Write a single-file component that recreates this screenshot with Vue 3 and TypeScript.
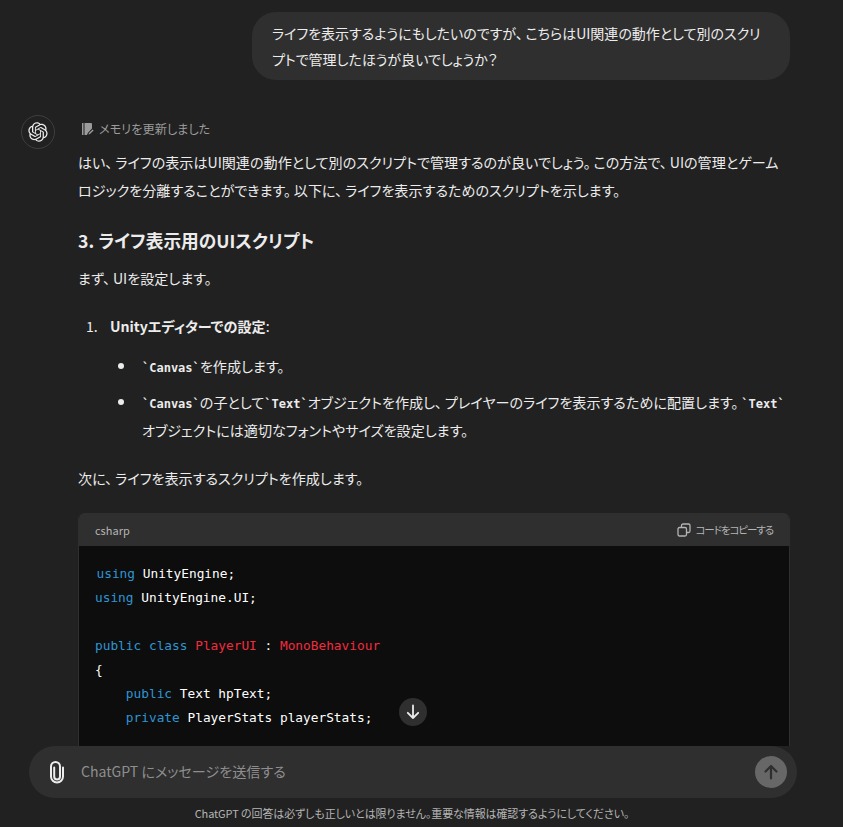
<template>
  <div class="page">
    <div class="thread">
      <div class="user-row">
        <div class="user-bubble">ライフを表示するようにもしたいのですが、&thinsp;こちらはUI関連の動作として別のスクリプトで管理したほうが良いでしょうか？</div>
      </div>

      <div class="reply">
        <div class="avatar">
          <svg viewBox="0 0 41 41" width="20" height="20" fill="currentColor">
            <path :d="logoPath" />
          </svg>
        </div>
        <div class="reply-body">
          <div class="memory">
            <svg viewBox="0 0 14 14" width="14" height="14" fill="currentColor">
              <path d="M2 1h1.5v12H2zM4.5 1H11a1 1 0 0 1 1 1v4.6L8 10.8 6.9 13H4.5z" />
              <path d="M9 11l3.6-3.6 1 1L10 12l-1.6.6z" />
            </svg>
            <span>メモリを更新しました</span>
          </div>
          <p class="para">はい、&thinsp;ライフの表示はUI関連の動作として別のスクリプトで管理するのが良いでしょう。&thinsp;この方法で、&thinsp;UIの管理とゲームロジックを分離することができます。&thinsp;以下に、&thinsp;ライフを表示するためのスクリプトを示します。</p>
          <h3 class="heading">3. ライフ表示用のUIスクリプト</h3>
          <p class="para">まず、&thinsp;UIを設定します。</p>

          <div class="step">
            <span class="step-num">1.</span>
            <strong>Unityエディターでの設定</strong><span>:</span>
          </div>
          <ul class="bullets">
            <li><code>`Canvas`</code>を作成します。</li>
            <li><code>`Canvas`</code>の子として<code>`Text`</code>オブジェクトを作成し、&thinsp;プレイヤーのライフを表示するために配置します。&thinsp;<code>`Text`</code>オブジェクトには適切なフォントやサイズを設定します。</li>
          </ul>

          <p class="para next">次に、&thinsp;ライフを表示するスクリプトを作成します。</p>

          <div class="code-card">
            <div class="code-head">
              <span>csharp</span>
              <span class="copy">
                <svg viewBox="0 0 14 14" width="14" height="14" fill="none" stroke="currentColor" stroke-width="1.3">
                  <rect x="1" y="4.5" width="8.5" height="8.5" rx="1.5" />
                  <path d="M4.5 4.5V2.5A1.5 1.5 0 0 1 6 1h5.5A1.5 1.5 0 0 1 13 2.5V8a1.5 1.5 0 0 1-1.5 1.5h-2" />
                </svg>
                <span class="copy-label">コードをコピーする</span>
              </span>
            </div>
            <div class="code-body">
              <div v-for="(line, i) in codeLines" :key="i" class="code-line">
                <span v-for="(tok, j) in line" :key="j" :class="tok.c">{{ tok.t }}</span>
              </div>
            </div>
          </div>
        </div>
      </div>
    </div>

    <button class="scroll-down" type="button">
      <svg viewBox="0 0 20 20" width="20" height="20" fill="none" stroke="currentColor" stroke-width="1.8" stroke-linecap="round" stroke-linejoin="round">
        <path d="M10 3.5v12.5M4.8 10.8 10 16l5.2-5.2" />
      </svg>
    </button>

    <div class="bottom">
      <div class="composer">
        <svg class="clip" viewBox="0 0 24 24" width="24" height="24" fill="none" stroke="currentColor" stroke-width="2" stroke-linecap="round">
          <path d="M9.2 7.5v9a2.9 2.9 0 0 0 5.8 0V6.5a4.5 4.5 0 0 0-9 0v10a6 6 0 0 0 12 0v-9" />
        </svg>
        <span class="placeholder">ChatGPT にメッセージを送信する</span>
        <span class="send">
          <svg viewBox="0 0 20 20" width="20" height="20" fill="none" stroke="currentColor" stroke-width="2.2" stroke-linecap="round" stroke-linejoin="round">
            <path d="M10 16.5V4M4.5 9.5 10 4l5.5 5.5" />
          </svg>
        </span>
      </div>
      <div class="disclaimer">ChatGPT の回答は必ずしも正しいとは限りません。重要な情報は確認するようにしてください。</div>
    </div>
  </div>
</template>

<script setup lang="ts">
interface Token {
  t: string
  c?: string
}

const logoPath =
  'M37.5324 16.8707C37.9808 15.5241 38.1363 14.0974 37.9886 12.6859C37.8409 11.2744 37.3934 9.91076 36.676 8.68622C35.6126 6.83404 33.9882 5.3676 32.0373 4.4985C30.0864 3.62941 27.9098 3.40259 25.8215 3.85078C24.8796 2.7893 23.7219 1.94125 22.4257 1.36341C21.1295 0.785575 19.7249 0.491269 18.3058 0.500197C16.1708 0.495044 14.0893 1.16803 12.3614 2.42214C10.6335 3.67624 9.34853 5.44666 8.6917 7.47815C7.30085 7.76286 5.98686 8.3414 4.8377 9.17505C3.68854 10.0087 2.73073 11.0782 2.02839 12.312C0.956464 14.1591 0.498905 16.2988 0.721698 18.4228C0.944492 20.5467 1.83612 22.5449 3.268 24.1293C2.81966 25.4759 2.66413 26.9026 2.81182 28.3141C2.95951 29.7256 3.40701 31.0892 4.12437 32.3138C5.18791 34.1659 6.8123 35.6322 8.76321 36.5013C10.7141 37.3704 12.8907 37.5973 14.9789 37.1492C15.9208 38.2107 17.0786 39.0587 18.3747 39.6366C19.6709 40.2144 21.0755 40.5087 22.4946 40.4998C24.6307 40.5054 26.7133 39.8321 28.4418 38.5772C30.1704 37.3223 31.4556 35.5506 32.1119 33.5179C33.5027 33.2332 34.8167 32.6547 35.9659 31.821C37.115 30.9874 38.0728 29.9178 38.7752 28.684C39.8458 26.8371 40.3023 24.6979 40.0789 22.5748C39.8556 20.4517 38.9639 18.4544 37.5324 16.8707ZM22.4978 37.8849C20.7443 37.8874 19.0459 37.2733 17.6994 36.1501C17.7601 36.117 17.8666 36.0586 17.936 36.0161L25.9004 31.4156C26.1003 31.3019 26.2663 31.137 26.3813 30.9378C26.4964 30.7386 26.5563 30.5124 26.5549 30.2825V19.0542L29.9213 20.998C29.9389 21.0068 29.9541 21.0198 29.9656 21.0359C29.977 21.052 29.9842 21.0707 29.9867 21.0902V30.3889C29.9842 32.375 29.1946 34.2791 27.7909 35.6841C26.3872 37.0892 24.4838 37.8806 22.4978 37.8849ZM6.39227 31.0064C5.51397 29.4888 5.19742 27.7107 5.49804 25.9832C5.55718 26.0187 5.66048 26.0818 5.73461 26.1244L13.699 30.7248C13.8975 30.8408 14.1233 30.902 14.3532 30.902C14.583 30.902 14.8088 30.8408 15.0073 30.7248L24.731 25.1103V28.9979C24.7321 29.0177 24.7283 29.0376 24.7199 29.0556C24.7115 29.0736 24.6988 29.0893 24.6829 29.1012L16.6317 33.7497C14.9096 34.7416 12.8643 35.0097 10.9447 34.4954C9.02506 33.9811 7.38785 32.7263 6.39227 31.0064ZM4.29707 13.6194C5.17156 12.0998 6.55279 10.9364 8.19885 10.3327C8.19885 10.4013 8.19491 10.5228 8.19491 10.6071V19.808C8.19351 20.0378 8.25334 20.2638 8.36823 20.4629C8.48312 20.6619 8.64893 20.8267 8.84863 20.9404L18.5723 26.5542L15.206 28.4979C15.1894 28.5089 15.1703 28.5155 15.1505 28.5173C15.1307 28.5191 15.1107 28.516 15.0924 28.5082L7.04046 23.8557C5.32135 22.8601 4.06716 21.2235 3.55289 19.3046C3.03862 17.3858 3.30624 15.3413 4.29707 13.6194ZM31.955 20.0556L22.2312 14.4411L25.5976 12.4981C25.6142 12.4872 25.6333 12.4805 25.6531 12.4787C25.6729 12.4769 25.6928 12.4801 25.7111 12.4879L33.7631 17.1364C34.9967 17.849 36.0017 18.8982 36.6606 20.1613C37.3194 21.4244 37.6047 22.849 37.4832 24.2684C37.3617 25.6878 36.8382 27.0432 35.9743 28.1759C35.1103 29.3086 33.9415 30.1717 32.6047 30.6641C32.6047 30.5947 32.6047 30.4733 32.6047 30.3889V21.188C32.6066 20.9586 32.5474 20.7328 32.4332 20.5338C32.319 20.3348 32.154 20.1698 31.955 20.0556ZM35.3055 15.0128C35.2464 14.9765 35.1431 14.9142 35.069 14.8717L27.1045 10.2712C26.906 10.1554 26.6803 10.0943 26.4504 10.0943C26.2206 10.0943 25.9948 10.1554 25.7963 10.2712L16.0726 15.8858V11.9982C16.0715 11.9783 16.0753 11.9585 16.0837 11.9405C16.0921 11.9225 16.1048 11.9068 16.1207 11.8949L24.1719 7.25025C25.4053 6.53903 26.8158 6.19376 28.2383 6.25482C29.6608 6.31589 31.0364 6.78077 32.2044 7.59508C33.3723 8.40939 34.2842 9.53945 34.8334 10.8531C35.3826 12.1667 35.5464 13.6095 35.3055 15.0128ZM14.2424 21.9419L10.8752 19.9981C10.8576 19.9893 10.8423 19.9763 10.8309 19.9602C10.8195 19.9441 10.8122 19.9254 10.8098 19.9058V10.6071C10.8107 9.18295 11.2173 7.78848 11.9819 6.58696C12.7466 5.38544 13.8377 4.42659 15.1275 3.82264C16.4173 3.21869 17.8524 2.99464 19.2649 3.1767C20.6775 3.35876 22.0089 3.93941 23.1034 4.85067C23.0427 4.88379 22.937 4.94215 22.8668 4.98473L14.9024 9.58517C14.7025 9.69878 14.5366 9.86356 14.4215 10.0626C14.3065 10.2616 14.2466 10.4877 14.2479 10.7175L14.2424 21.9419ZM16.071 17.9991L20.4018 15.4978L24.7325 17.9975V22.9985L20.4018 25.4983L16.071 22.9985V17.9991Z'

const codeLines: Token[][] = [
  [{ t: 'using', c: 'kw' }, { t: ' UnityEngine;' }],
  [{ t: 'using', c: 'kw' }, { t: ' UnityEngine.UI;' }],
  [{ t: ' ' }],
  [
    { t: 'public class', c: 'kw' },
    { t: ' ' },
    { t: 'PlayerUI', c: 'type' },
    { t: ' : ' },
    { t: 'MonoBehaviour', c: 'type' },
  ],
  [{ t: '{' }],
  [{ t: '    ' }, { t: 'public', c: 'kw' }, { t: ' Text hpText;' }],
  [{ t: '    ' }, { t: 'private', c: 'kw' }, { t: ' PlayerStats playerStats;' }],
  [{ t: ' ' }],
]
</script>

<style>
html,
body {
  margin: 0;
  background: #212121;
}
</style>

<style scoped>
.page {
  position: relative;
  width: 843px;
  height: 827px;
  overflow: hidden;
  background: #212121;
  color: #ececec;
  font-family: "Noto Sans CJK JP", "Noto Sans", sans-serif;
  font-feature-settings: "palt";
  font-size: 14.1px;
  line-height: 28px;
}

.thread {
  padding: 12px 53px 0 21px;
}

.user-row {
  display: flex;
  justify-content: flex-end;
}

.user-bubble {
  width: 538px;
  box-sizing: border-box;
  padding: 8px 20px;
  background: #2f2f2f;
  border-radius: 24px;
  font-size: 14px;
  line-height: 26px;
}

.reply {
  display: flex;
  gap: 23px;
  margin-top: 35px;
}

.avatar {
  flex: none;
  width: 34px;
  height: 34px;
  box-sizing: border-box;
  border: 1px solid #3e3e3e;
  border-radius: 50%;
  display: flex;
  align-items: center;
  justify-content: center;
  color: #ececec;
}

.reply-body {
  flex: 1;
  min-width: 0;
}

.memory {
  display: flex;
  align-items: center;
  gap: 5px;
  padding: 0 0 5px 2px;
  height: 33px;
  box-sizing: border-box;
  font-size: 12.2px;
  color: #9b9b9b;
}

.para {
  margin: 0;
  padding-right: 8px;
}

.heading {
  margin: 20px 0 0;
  font-size: 17.7px;
  font-weight: 700;
  line-height: 32px;
}

.heading + .para {
  margin-top: 8px;
}

.step {
  margin-top: 20px;
  padding-left: 8px;
}

.step-num {
  display: inline-block;
  width: 24px;
}

.step strong {
  font-weight: 700;
}

.bullets {
  margin: 12px 0 0;
  padding: 0 0 0 64px;
  list-style: none;
}

.bullets li {
  position: relative;
  margin-bottom: 8px;
}

.bullets li::before {
  content: "";
  position: absolute;
  left: -24px;
  top: 11px;
  width: 6px;
  height: 6px;
  border-radius: 50%;
  background: #ececec;
}

.bullets code {
  font-family: "DejaVu Sans Mono", monospace;
  font-size: 12px;
  font-weight: 700;
  line-height: 1;
  font-feature-settings: normal;
}

.next {
  margin-top: 20px;
}

.code-card {
  margin-top: 21px;
  border-radius: 6px;
  overflow: hidden;
  background: #0d0d0d;
  border: 1px solid #2f2f2f;
  border-width: 0 1px;
}

.code-head {
  display: flex;
  justify-content: space-between;
  align-items: center;
  height: 33px;
  padding: 0 16px;
  background: #2f2f2f;
  font-size: 11px;
  color: #b4b4b4;
}

.copy {
  display: flex;
  align-items: center;
  gap: 5px;
}

.copy-label {
  font-size: 10.5px;
  letter-spacing: -1.1px;
}

.code-body {
  padding: 16px;
  font-family: "DejaVu Sans Mono", monospace;
  font-size: 12.8px;
  line-height: 24px;
  color: #fff;
  font-feature-settings: normal;
}

.code-line {
  white-space: pre;
  height: 24px;
}

.code-line:first-child {
  padding-left: 1.5px;
}

.kw {
  color: #2e95d3;
}

.type {
  color: #f22c3d;
}

.scroll-down {
  position: absolute;
  left: 399px;
  top: 698px;
  width: 28px;
  height: 28px;
  padding: 0;
  border: none;
  border-radius: 50%;
  background: #2f2f2f;
  color: #ececec;
  display: flex;
  align-items: center;
  justify-content: center;
}

.bottom {
  position: absolute;
  left: 0;
  right: 0;
  bottom: 0;
  background: #212121;
}

.composer {
  display: flex;
  align-items: center;
  height: 52px;
  margin: 0 46px 0 29px;
  padding: 0 10px 0 16px;
  background: #2f2f2f;
  border-radius: 26px;
}

.clip {
  flex: none;
  color: #ececec;
}

.placeholder {
  flex: 1;
  margin-left: 12px;
  padding-bottom: 2px;
  font-size: 14.1px;
  color: #8e8e8e;
}

.send {
  flex: none;
  width: 32px;
  height: 32px;
  border-radius: 50%;
  background: #676767;
  color: #2f2f2f;
  display: flex;
  align-items: center;
  justify-content: center;
}

.disclaimer {
  height: 29px;
  padding-right: 19px;
  display: flex;
  align-items: center;
  justify-content: center;
  font-size: 11px;
  letter-spacing: -0.1px;
  line-height: 16px;
  color: #b4b4b4;
}
</style>
